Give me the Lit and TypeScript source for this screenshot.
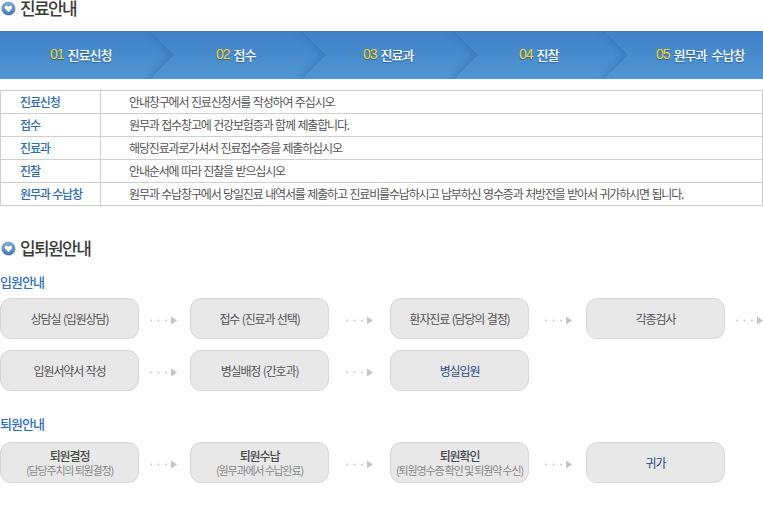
import { LitElement, html, css, svg } from "lit";
import { customElement } from "lit/decorators.js";

const heart = html`<svg class="heart" width="16" height="16" viewBox="0 0 16 16">
  <defs><linearGradient id="hg" x1="0" y1="0" x2="0" y2="1"><stop offset="0" stop-color="#86aedb"/><stop offset="1" stop-color="#3f77b8"/></linearGradient></defs>
  <circle cx="9" cy="9" r="6.8" fill="#cfcfcf"/>
  <circle cx="8.4" cy="8.4" r="6.8" fill="url(#hg)"/>
  <path d="M8.4 12.2 L5 8.7 C4 7.4 4.9 5.6 6.4 5.7 C7.3 5.7 8 6.3 8.4 7 C8.8 6.3 9.5 5.7 10.4 5.7 C11.9 5.6 12.8 7.4 11.8 8.7 Z" fill="#fff"/>
</svg>`;

const arrow = html`<svg class="dots" width="28" height="9" viewBox="0 0 28 9">
  <circle cx="2" cy="4.5" r="1" fill="#cacaca"/><circle cx="9.5" cy="4.5" r="1" fill="#cacaca"/><circle cx="17" cy="4.5" r="1" fill="#cacaca"/>
  <path d="M22 .5 L28 4.5 L22 8.5 Z" fill="#c4c4c4"/>
</svg>`;

const chevron = svg`
  <defs>
    <clipPath id="cc"><path d="M0 0 H24 L48 24 L24 48 H0 Z"/></clipPath>
    <filter id="bl" x="-50%" y="-50%" width="200%" height="200%"><feGaussianBlur stdDeviation="3.5"/></filter>
    <filter id="bl2" x="-50%" y="-100%" width="200%" height="300%"><feGaussianBlur stdDeviation="2"/></filter>
  </defs>
  <g clip-path="url(#cc)"><path d="M24 -4 L48 24 L24 52" fill="none" stroke="#2f6cab" stroke-opacity=".55" stroke-width="8" filter="url(#bl)"/></g>
  <path d="M26 49 H36" stroke="#000" stroke-opacity=".1" stroke-width="4" filter="url(#bl2)"/>
`;

const steps = [
  ["s1", "01", "진료신청"],
  ["s2", "02", "접수"],
  ["s3", "03", "진료과"],
  ["s4", "04", "진찰"],
  ["s5", "05", "원무과 수납창"],
];

const rows = [
  ["진료신청", "안내창구에서 진료신청서를 작성하여 주십시오"],
  ["접수", "원무과 접수창고에 건강보험증과 함께 제출합니다."],
  ["진료과", "해당진료과로가셔서 진료접수증을 제출하십시오"],
  ["진찰", "안내순서에 따라 진찰을 받으십시오"],
  ["원무과 수납창", "원무과 수납창구에서 당일진료 내역서를 제출하고 진료비를수납하시고 납부하신 영수증과 처방전을 받아서 귀가하시면 됩니다."],
];

type Box = { t: string; sub?: string; end?: boolean };

const admit: Box[] = [
  { t: "상담실 (입원상담)" }, { t: "접수 (진료과 선택)" }, { t: "환자진료 (담당의 결정)" }, { t: "각종검사" },
  { t: "입원서약서 작성" }, { t: "병실배정 (간호과)" }, { t: "병실입원", end: true },
];
const leave: Box[] = [
  { t: "퇴원결정", sub: "(담당주치의 퇴원결정)" },
  { t: "퇴원수납", sub: "(원무과에서 수납완료)" },
  { t: "퇴원확인", sub: "(퇴원영수증 확인 및 퇴원약 수신)" },
  { t: "귀가", end: true },
];

@customElement("app-root")
export class AppRoot extends LitElement {
  static styles = css`
    :host { display: block; width: 763px; height: 514px; overflow: hidden; background: #fff;
      font-family: "Noto Sans CJK KR", "Noto Sans", sans-serif; font-size: 12px; letter-spacing: -1.15px; word-spacing: 1px; color: #555; }
    .head { display: flex; align-items: center; height: 16px; line-height: 16px; font-size: 17px; font-weight: 500; letter-spacing: -1.6px; color: #3c3c3c; }
    .head .heart { margin: 0 4px 0 0; flex: none; }
    .banner { display: flex; height: 48px; margin-top: 15px; background: linear-gradient(#3f82c7, #5196d4); border-top: 1px solid #3c7ebf; box-sizing: border-box; }
    .step { position: relative; display: flex; align-items: center; box-sizing: border-box; flex: none; padding-bottom: 3px; font-size: 13px; font-weight: 500; color: #fff; text-shadow: 0 1px 1px rgba(20,60,110,.55); white-space: nowrap; letter-spacing: -0.95px; word-spacing: 3px; }
    .step b { font-weight: 400; font-size: 14px; color: #f5d327; margin-right: 4px; letter-spacing: -1px; font-family: "Liberation Sans", sans-serif; }
    .s1 { width: 174px; padding-left: 50px; }
    .s2 { width: 152px; padding-left: 42px; }
    .s3 { width: 152px; padding-left: 37px; }
    .s4 { width: 150px; padding-left: 41px; }
    .s5 { width: 135px; padding-left: 28px; }
    .step svg { position: absolute; right: 0; top: -1px; overflow: visible; }
    table { border-collapse: collapse; width: 763px; margin-top: 11px; table-layout: fixed; }
    td { border: 1px solid #cfcfcf; height: 23px; padding: 0 0 1px; box-sizing: border-box; white-space: nowrap; line-height: 1; }
    td.k { width: 100px; padding-left: 19px; color: #2e6db4; font-weight: 500; }
    td.v { padding-left: 28px; color: #555; }
    .head.second { margin-top: 34px; }
    h3 { margin: 0; font-size: 13px; font-weight: 500; color: #2f70bf; line-height: 16px; letter-spacing: -1px; }
    h3.a { margin-top: 18px; }
    h3.b { margin-top: 25px; }
    .flow { display: grid; grid-template-columns: 139px 51px 139px 61px 139px 57px 139px 38px; row-gap: 11px; margin-top: 8px; }
    .flow.l { margin-top: 10px; }
    .box { height: 41px; box-sizing: border-box; background: #e8e8e8; border: 1px solid #d6d6d6; border-radius: 11px;
      display: flex; flex-direction: column; align-items: center; justify-content: center; text-align: center; white-space: nowrap; color: #555; }
    .box.end { color: #2b4a8c; }
    .box .main { line-height: 14px; color: #4a4a4a; font-weight: 500; }
    .box .sub { line-height: 14px; font-size: 11px; color: #888; letter-spacing: -1.15px; word-spacing: 0; }
    .arr { display: flex; align-items: center; padding-top: 4px; }
    .arr.c1 { padding-left: 10px; }
    .arr.c2 { padding-left: 16px; }
    .arr.c3 { padding-left: 15px; }
    .arr.c0 { padding-left: 10px; }
  `;

  private flow(items: Box[], cls: string) {
    const rowLen = 4;
    return html`<div class="flow ${cls}">
      ${items.map((b, i) => {
        const isLast = i === items.length - 1;
        const col = i % rowLen;
        return html`<div class="box ${b.end ? "end" : ""}">
            ${b.sub ? html`<span class="main">${b.t}</span><span class="sub">${b.sub}</span>` : b.t}
          </div>
          ${isLast ? "" : html`<div class="arr c${(col + 1) % 4}">${arrow}</div>`}`;
      })}
    </div>`;
  }

  render() {
    return html`
      <div class="head first">${heart}<span>진료안내</span></div>
      <div class="banner">
        ${steps.map(([c, n, t], i) => html`<div class="step ${c}"><b>${n}</b>${t}
          ${i < 4 ? html`<svg width="48" height="48" viewBox="0 0 48 48">${chevron}</svg>` : ""}</div>`)}
      </div>
      <table>
        ${rows.map(([k, v]) => html`<tr><td class="k">${k}</td><td class="v">${v}</td></tr>`)}
      </table>
      <div class="head second">${heart}<span>입퇴원안내</span></div>
      <h3 class="a">입원안내</h3>
      ${this.flow(admit, "")}
      <h3 class="b">퇴원안내</h3>
      ${this.flow(leave, "l")}
    `;
  }
}
